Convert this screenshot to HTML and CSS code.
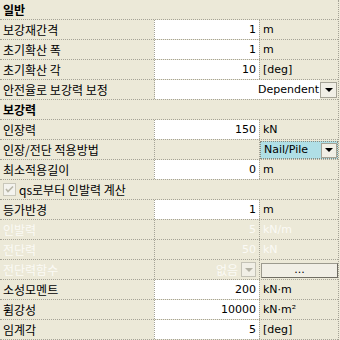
FILE: index.html
```html
<!DOCTYPE html>
<html>
<head>
  <title>Properties</title>
  <link rel="stylesheet" href="styles.css">
</head>
<body>
  <div class="grid">
    <div class="row head">일반</div>
    <div class="row"><div class="lbl">보강재간격</div><div class="val">1</div><div class="unit">m</div></div>
    <div class="row"><div class="lbl">초기확산 폭</div><div class="val">1</div><div class="unit">m</div></div>
    <div class="row"><div class="lbl">초기확산 각</div><div class="val">10</div><div class="unit">[deg]</div></div>
    <div class="row">
      <div class="lbl">안전율로 보강력 보정</div>
      <div class="wide">
        <div class="combo-text">Dependent</div>
        <div class="drop"><span class="arrow"></span></div>
      </div>
    </div>

    <div class="row head">보강력</div>
    <div class="row"><div class="lbl">인장력</div><div class="val">150</div><div class="unit">kN</div></div>
    <div class="row">
      <div class="lbl">인장/전단 적용방법</div>
      <div class="val off"></div>
      <div class="unit">
        <div class="combo-focus">
          <span class="combo-label">Nail/Pile</span>
          <div class="drop small"><span class="arrow"></span></div>
        </div>
      </div>
    </div>
    <div class="row"><div class="lbl">최소적용길이</div><div class="val">0</div><div class="unit">m</div></div>
    <div class="row full">
      <svg class="check" width="13" height="13" viewBox="0 0 13 13">
        <rect x="0.5" y="0.5" width="12" height="12" fill="#f4f3ee" stroke="#c9c7ba"/>
        <path d="M3 6 L5 8.5 L10 3.5" fill="none" stroke="#b8b6a8" stroke-width="1.6"/>
      </svg>
      <span>qs로부터 인발력 계산</span>
    </div>
    <div class="row"><div class="lbl">등가반경</div><div class="val">1</div><div class="unit">m</div></div>
    <div class="row dis"><div class="lbl">인발력</div><div class="val off">5</div><div class="unit">kN/m</div></div>
    <div class="row dis"><div class="lbl">전단력</div><div class="val off">50</div><div class="unit">kN</div></div>
    <div class="row dis">
      <div class="lbl">전단력함수</div>
      <div class="val off pick">
        <span>없음</span>
        <div class="drop tiny"><span class="arrow"></span></div>
      </div>
      <div class="unit"><div class="dots">...</div></div>
    </div>
    <div class="row"><div class="lbl">소성모멘트</div><div class="val">200</div><div class="unit">kN·m</div></div>
    <div class="row"><div class="lbl">휨강성</div><div class="val">10000</div><div class="unit">kN·m²</div></div>
    <div class="row"><div class="lbl">임계각</div><div class="val">5</div><div class="unit">[deg]</div></div>
  </div>
</body>
</html>
```

FILE: styles.css
```css
body {
  margin: 0;
  background-color: #ece9d8;
  font-family: "DejaVu Sans", "Noto Sans CJK KR", sans-serif;
  font-size: 11px;
  color: #000;
}
.grid {
  width: 339px;
  box-sizing: border-box;
  border-right: 1px dotted #a5a396;
}
.row {
  display: grid;
  grid-template-columns: 154px 105px 1fr;
  height: 20px;
  box-sizing: border-box;
  border-bottom: 1px dotted #a5a396;
  line-height: 19px;
}
.head {
  display: block;
  padding-left: 3px;
  font-family: "Noto Sans CJK KR", sans-serif;
  font-size: 12px;
  font-weight: bold;
}
.lbl {
  padding-left: 3px;
  font-family: "Noto Sans CJK KR", sans-serif;
  font-size: 12px;
  white-space: nowrap;
}
.val {
  border-left: 1px dotted #a5a396;
  background-color: #fff;
  text-align: right;
  padding-right: 3px;
}
.val.off {
  background-color: transparent;
}
.unit {
  border-left: 1px dotted #a5a396;
  padding-left: 3px;
}
.wide {
  grid-column: span 2;
  border-left: 1px dotted #a5a396;
  display: flex;
  align-items: center;
}
.combo-text {
  flex: 1;
  align-self: stretch;
  background-color: #fff;
  text-align: right;
  padding-right: 1px;
}
.drop {
  width: 17px;
  height: 16px;
  box-sizing: border-box;
  border: 1px solid #a5a396;
  background-color: #f1efe6;
  margin-right: 1px;
  display: flex;
  align-items: center;
  justify-content: center;
  flex-shrink: 0;
}
.arrow {
  width: 0;
  height: 0;
  border-left: 4px solid transparent;
  border-right: 4px solid transparent;
  border-top: 4px solid #000;
}
.unit:has(.combo-focus) {
  padding-left: 0;
}
.combo-focus {
  margin-top: 1px;
  height: 18px;
  box-sizing: border-box;
  border: 1px dotted #8c8a7e;
  background-color: #b0dfe6;
  display: flex;
  align-items: center;
  padding-left: 3px;
  line-height: 16px;
}
.combo-label {
  flex: 1;
}
.drop.small {
  width: 16px;
  height: 15px;
  margin-right: 0;
}
.full {
  display: flex;
  align-items: center;
  padding-left: 3px;
  gap: 3px;
  font-family: "Noto Sans CJK KR", sans-serif;
  font-size: 12px;
}
.check {
  display: block;
}
.dis {
  color: #fbfaf5;
}
.pick {
  display: flex;
  align-items: center;
  justify-content: flex-end;
  gap: 3px;
  font-family: "Noto Sans CJK KR", sans-serif;
  font-size: 12px;
}
.drop.tiny {
  width: 15px;
  height: 15px;
  margin-right: 0;
  border-color: #c4c2b6;
}
.drop.tiny .arrow {
  border-top-color: #b3b1a4;
}
.unit:has(.dots) {
  padding-left: 1px;
}
.dots {
  margin-top: 3px;
  height: 15px;
  box-sizing: border-box;
  border: 1px solid #9c9a8e;
  border-right-color: #6f6d63;
  border-bottom-color: #6f6d63;
  background-color: #f1efe6;
  color: #000;
  text-align: center;
  line-height: 11px;
  font-size: 11px;
}
```
